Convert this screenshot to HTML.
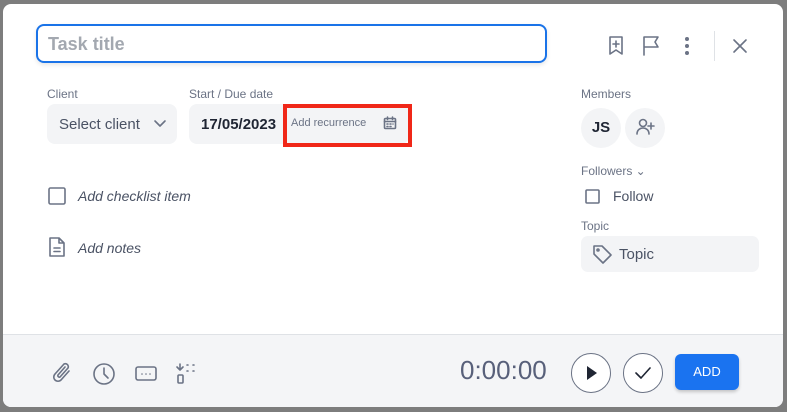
<!DOCTYPE html>
<html><head><style>
*{box-sizing:border-box;margin:0;padding:0}
body{width:787px;height:412px;background:#7d7d7d;font-family:"Liberation Sans",sans-serif;position:relative;overflow:hidden}
.m{position:absolute;left:3px;top:4px;width:780px;height:403px;background:#fff;border-radius:8px;overflow:hidden}
.a{position:absolute}
.lbl{font-size:12px;color:#6b7385}
.foot{position:absolute;left:0;top:330px;width:780px;height:73px;background:#f4f5f7;border-top:1px solid #dfe2e6}
svg{position:absolute;fill:none;stroke:#6b7385;stroke-width:1.6;stroke-linecap:round;stroke-linejoin:round}
</style></head><body>
<div class="m">
<div class="a" style="left:33px;top:20px;width:511px;height:39px;border:2px solid #1a73e8;border-radius:8px;box-shadow:0 2px 4px rgba(0,0,0,.1)"></div>
<div class="a" style="left:45px;top:30px;font-size:18px;font-weight:bold;color:#a3a8b0">Task title</div>

<div class="a lbl" style="left:44px;top:83px">Client</div>
<div class="a" style="left:44px;top:100px;width:130px;height:40px;background:#f3f4f6;border-radius:8px"></div>
<div class="a" style="left:56px;top:112px;font-size:15px;color:#4a5264">Select client</div>
<svg style="left:150px;top:114px" width="14" height="10"><path d="M2 3l5 5 5-5"/></svg>

<div class="a lbl" style="left:186px;top:83px">Start / Due date</div>
<div class="a" style="left:186px;top:100px;width:220px;height:40px;background:#f3f4f6;border-radius:8px"></div>
<div class="a" style="left:198px;top:112px;font-size:15px;font-weight:bold;color:#1f2533">17/05/2023</div>
<div class="a" style="left:280px;top:100px;width:129px;height:43px;border:4px solid #f02718"></div>
<div class="a" style="left:288px;top:113px;font-size:11px;color:#6b7385">Add recurrence</div>
<svg style="left:380px;top:112px" width="14" height="14" stroke-width="1.2"><rect x="1.5" y="2.5" width="11" height="10" rx="1"/><path d="M1.5 5.5h11M4.5 1v2.5M9.5 1v2.5M4 8h1M7 8h1M10 8h0M4 10.5h1M7 10.5h1"/></svg>

<svg style="left:45px;top:183px" width="18" height="18"><rect x="1" y="1" width="16" height="16" rx="1.5"/></svg>
<div class="a" style="left:75px;top:184px;font-size:14px;font-style:italic;color:#4a5264">Add checklist item</div>
<svg style="left:45px;top:232px" width="18" height="22"><path d="M2 2h9l5 5v13H2z M11 2v5h5 M6 12h6M6 15.5h6"/></svg>
<div class="a" style="left:75px;top:236px;font-size:14px;font-style:italic;color:#4a5264">Add notes</div>

<svg style="left:604px;top:31px" width="20" height="22"><path d="M3 2h12v17l-6-4-6 4z M9 6v6M6 9h6"/></svg>
<svg style="left:638px;top:31px" width="20" height="22"><path d="M3 20V2h14l-3 5 3 5H3"/></svg>
<div class="a" style="left:682px;top:33px;width:4px;height:4px;border-radius:2px;background:#6b7385"></div>
<div class="a" style="left:682px;top:40px;width:4px;height:4px;border-radius:2px;background:#6b7385"></div>
<div class="a" style="left:682px;top:47px;width:4px;height:4px;border-radius:2px;background:#6b7385"></div>
<div class="a" style="left:711px;top:27px;width:1px;height:30px;background:#dfe2e6"></div>
<svg style="left:729px;top:34px" width="16" height="16"><path d="M2 2l12 12M14 2L2 14"/></svg>

<div class="a lbl" style="left:578px;top:83px">Members</div>
<div class="a" style="left:578px;top:104px;width:40px;height:40px;border-radius:20px;background:#f3f4f6;font-size:15px;font-weight:bold;color:#1f2533;text-align:center;line-height:40px">JS</div>
<div class="a" style="left:622px;top:104px;width:40px;height:40px;border-radius:20px;background:#f3f4f6"></div>
<svg style="left:632px;top:113px" width="22" height="20" stroke-width="1.3"><circle cx="8" cy="6" r="3.5"/><path d="M2 17c0-4 3-6 6-6s6 2 6 6M16 6v6M13 9h6"/></svg>
<div class="a lbl" style="left:578px;top:160px">Followers ⌄</div>
<svg style="left:582px;top:185px" width="16" height="16"><rect x="1" y="1" width="13" height="13" rx="1"/></svg>
<div class="a" style="left:610px;top:184px;font-size:14px;color:#4a5264">Follow</div>
<div class="a lbl" style="left:578px;top:215px">Topic</div>
<div class="a" style="left:578px;top:232px;width:178px;height:36px;background:#f3f4f6;border-radius:7px"></div>
<svg style="left:589px;top:240px" width="22" height="20"><path d="M2 2h8l9 9-8 8-9-9z"/><circle cx="6" cy="6" r="1"/></svg>
<div class="a" style="left:616px;top:242px;font-size:15px;color:#4a5264">Topic</div>

<div class="foot">
<svg style="left:48px;top:26px" width="24" height="26"><path d="M18 10l-8 9a4 4 0 01-6-6l9-10a3 3 0 014 4l-8 9a1.5 1.5 0 01-2-2l7-8"/></svg>
<svg style="left:89px;top:27px" width="24" height="24"><circle cx="12" cy="12" r="10"/><path d="M12 6v6l4 4"/></svg>
<svg style="left:131px;top:30px" width="24" height="18" stroke="#aab0b8"><rect x="2" y="2" width="20" height="13" rx="2"/><path d="M8 9h0M12 9h0M16 9h0"/></svg>
<svg style="left:170px;top:26px" width="26" height="26"><path d="M7 3v6M4 6l3 3 3-3 M14 4h1M20 4h1M14 10h1M20 10h1"/><rect x="5" y="14" width="5" height="8" rx="1"/></svg>
<div class="a" style="left:457px;top:20px;font-size:26px;color:#58607a">0:00:00</div>
<div class="a" style="left:568px;top:18px;width:40px;height:40px;border:1px solid #6b7385;border-radius:50%;background:#fff"></div>
<div class="a" style="left:584px;top:31px;width:0;height:0;border-left:10px solid #1f2533;border-top:7px solid transparent;border-bottom:7px solid transparent"></div>
<div class="a" style="left:620px;top:18px;width:40px;height:40px;border:1px solid #6b7385;border-radius:50%;background:#fff"></div>
<svg style="left:630px;top:28px;stroke:#1f2533" width="20" height="20"><path d="M3 10l5 5 9-10"/></svg>
<div class="a" style="left:672px;top:19px;width:64px;height:36px;background:#1a73f0;border-radius:6px;box-shadow:0 2px 3px rgba(0,0,0,.2);color:#fff;font-size:13px;text-align:center;line-height:36px">ADD</div>
</div>
</div>
</body></html>
